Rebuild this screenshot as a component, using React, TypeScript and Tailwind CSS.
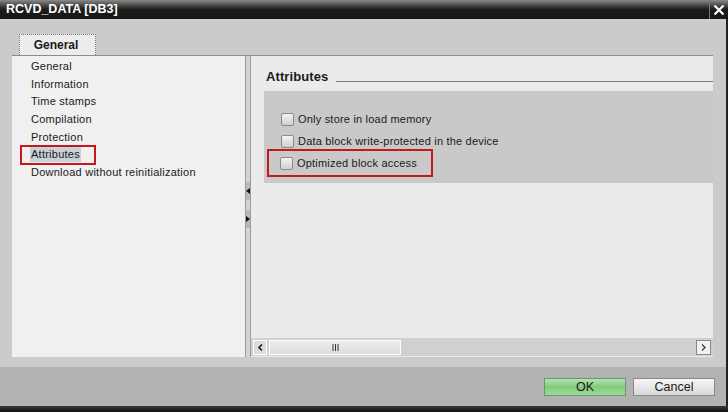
import React from "react";

const font = { fontFamily: '"Liberation Sans", Arial, sans-serif' };

function Checkbox() {
  return (
    <span className="inline-block w-[13px] h-[13px] rounded-[2px] border border-[#8a8a8a] bg-gradient-to-b from-[#f4f4f4] to-[#cfcfcf] shrink-0" />
  );
}

export default function App() {
  const items = [
    "General",
    "Information",
    "Time stamps",
    "Compilation",
    "Protection",
    "Attributes",
    "Download without reinitialization",
  ];
  return (
    <div
      className="w-[728px] h-[412px] flex flex-col bg-[#cbcbcb] overflow-hidden text-[#1a1a1a]"
      style={font}
    >
      {/* Title bar */}
      <div className="h-[19px] flex items-center justify-between bg-gradient-to-b from-[#8a8a8a] via-[#1c1c1c] to-[#161616]">
        <span className="pl-[6px] text-white text-[12.5px] font-bold leading-none">
          RCVD_DATA [DB3]
        </span>
        <div className="h-full w-[19px] border-l border-[#777] flex items-center justify-center">
          <svg width="12" height="12" viewBox="0 0 12 12">
            <path d="M1.5 1.5 L10.5 10.5 M10.5 1.5 L1.5 10.5" stroke="#fff" strokeWidth="2.2" />
          </svg>
        </div>
      </div>

      {/* Body */}
      <div className="h-[348px] flex flex-col pl-[12px] pr-[11px] border-r-[2px] border-[#222]">
        <div className="pt-[15px] flex">
          <div className="ml-[7px] w-[77px] h-[21px] bg-[#ececec] border border-dotted border-[#777] border-b-0 flex items-center justify-center text-[12px] font-bold pr-[3px]">
            General
          </div>
        </div>
        <div className="h-[302px] flex border-t border-[#8c8c8c] mr-[2px]">
          {/* Left list */}
          <div className="w-[233px] bg-[#f0f0f0] flex flex-col pt-[2px]">
            {items.map((t) =>
              t === "Attributes" ? (
                <div key={t} className="h-[17.6px] flex items-center pl-[8px]">
                  <div className="w-[76px] h-[20px] border-2 border-[#c8161d] flex items-center pl-[8px]">
                    <span className="text-[11px] tracking-[0.25px] leading-none px-[1px] py-[2px] bg-[#c8d0d8]">
                      {t}
                    </span>
                  </div>
                </div>
              ) : (
                <div key={t} className="h-[17.6px] flex items-center pl-[18px]">
                  <span className="text-[11px] tracking-[0.25px] leading-none px-[1px] py-[2px]">{t}</span>
                </div>
              )
            )}
          </div>
          {/* Splitter */}
          <div className="w-[6px] flex flex-col items-center justify-center gap-[10px] bg-[#d4d4d4] border-x border-[#9a9a9a] pb-[4px]">
            <div className="h-[18px] w-full bg-[#b9b9b9] flex items-center justify-center">
              <svg width="4" height="6" viewBox="0 0 4 6"><path d="M4 0 L0 3 L4 6 Z" fill="#111" /></svg>
            </div>
            <div className="h-[18px] w-full bg-[#b9b9b9] flex items-center justify-center">
              <svg width="4" height="6" viewBox="0 0 4 6"><path d="M0 0 L4 3 L0 6 Z" fill="#111" /></svg>
            </div>
          </div>
          {/* Right panel */}
          <div className="flex-1 bg-[#ebebeb] flex flex-col">
            <div className="flex items-end pl-[15px] pt-[12px] h-[27px]">
              <span className="text-[13px] font-bold leading-none tracking-[0.1px]">Attributes</span>
              <div className="flex-1 ml-[8px] mb-[1px] border-b border-[#777]" />
            </div>
            <div className="ml-[13px] mt-[8px] h-[92px] bg-[#c9c9c9] flex flex-col pt-[21px] pl-[17px] gap-[8px]">
              <div className="flex items-center gap-[4px] h-[14px]">
                <Checkbox />
                <span className="text-[11px] tracking-[0.2px]">Only store in load memory</span>
              </div>
              <div className="flex items-center gap-[4px] h-[14px]">
                <Checkbox />
                <span className="text-[11px] tracking-[0.2px]">Data block write-protected in the device</span>
              </div>
              <div className="flex items-center gap-[4px] h-[14px] -ml-[13px] w-[164px] pl-[12px] outline-2 outline-[#c8161d] -outline-offset-[1px] py-[13px] -my-[6px]">
                <Checkbox />
                <span className="text-[11px] tracking-[0.2px]">Optimized block access</span>
              </div>
            </div>
            <div className="flex-1" />
            {/* Horizontal scrollbar */}
            <div className="h-[18px] flex items-center gap-[2px] px-[2px] bg-[#d0d0d0] mb-[1px]">
              <div className="w-[14px] h-[15px] border border-[#fff] bg-[#dcdcdc] flex items-center justify-center">
                <svg width="5" height="7" viewBox="0 0 5 7"><path d="M4 0.5 L1 3.5 L4 6.5" stroke="#222" strokeWidth="1.6" fill="none" /></svg>
              </div>
              <div className="w-[132px] h-[15px] border border-[#fff] bg-gradient-to-b from-[#eeeeee] to-[#dcdcdc] flex items-center justify-center">
                <svg width="7" height="7" viewBox="0 0 7 7"><path d="M1 0 V7 M3.5 0 V7 M6 0 V7" stroke="#333" strokeWidth="1" /></svg>
              </div>
              <div className="flex-1" />
              <div className="w-[15px] h-[15px] border border-[#888] bg-[#f2f2f2] flex items-center justify-center">
                <svg width="5" height="7" viewBox="0 0 5 7"><path d="M1 0.5 L4 3.5 L1 6.5" stroke="#444" strokeWidth="1.4" fill="none" /></svg>
              </div>
            </div>
          </div>
        </div>
      </div>

      {/* Button bar */}
      <div className="h-[39px] bg-[#b2b2b2] flex items-center justify-end gap-[7px] pr-[11px] pt-[1px] border-r-[2px] border-[#222]">
        <button className="w-[82px] h-[18px] border border-[#6a9a6a] bg-gradient-to-b from-[#b6e2b2] via-[#7fcb7c] to-[#9ed89b] text-[12.5px] leading-none text-[#1a1a1a]">
          OK
        </button>
        <button className="w-[82px] h-[18px] border border-[#8a8a8a] bg-gradient-to-b from-[#f6f6f6] to-[#d8d8d8] text-[12.5px] leading-none text-[#1a1a1a]">
          Cancel
        </button>
      </div>
      <div className="h-[6px] bg-gradient-to-b from-[#3a3a3a] to-[#111]" />
    </div>
  );
}
